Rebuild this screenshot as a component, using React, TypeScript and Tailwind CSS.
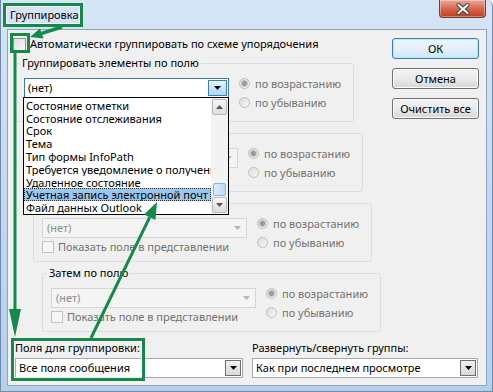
import React from "react";

const Tri = ({ color = "#000" }: { color?: string }) => (
  <svg width="7" height="4" viewBox="0 0 7 4">
    <path d="M0 0h7L3.5 4z" fill={color} />
  </svg>
);

function Radio({ checked, label }: { checked?: boolean; label: string }) {
  return (
    <div className="flex items-center h-[11px]">
      <span className="w-[11px] h-[11px] rounded-full border border-[#bdbdbd] bg-gradient-to-br from-[#dcdcdc] to-[#f7f7f7] flex items-center justify-center shrink-0">
        {checked && (
          <span className="w-[7px] h-[7px] rounded-full border border-[#c4c4c4] bg-[#9a9a9a]" />
        )}
      </span>
      <span className="ml-[5px] text-[#727272] whitespace-nowrap leading-[14px]">{label}</span>
    </div>
  );
}

function SmallCheck({ label, hidden }: { label: string; hidden?: boolean }) {
  return (
    <div className={`flex items-center h-[13px] mt-[2px] ${hidden ? "invisible" : ""}`}>
      <span className="w-[12px] h-[12px] border border-[#c3c3c3] bg-[#f6f6f6] shrink-0" />
      <span className="ml-[4px] text-[#727272] whitespace-nowrap leading-[14px]">{label}</span>
    </div>
  );
}

function DisabledDrop({ hideText }: { hideText?: boolean }) {
  return (
    <div className="h-[20px] w-[205px] border border-[#d6d6d6] bg-[#f4f4f4] flex items-center">
      <span className={`pl-[4px] text-[#8d8d8d] leading-[14px] ${hideText ? "invisible" : ""}`}>(нет)</span>
      <span className="ml-auto mr-[5px] flex items-center">
        <Tri color="#b5b5b5" />
      </span>
    </div>
  );
}

function GroupBox({
  title,
  indent,
  active,
  covered = 0,
  className = "",
}: {
  title: string;
  indent: string;
  active?: boolean;
  covered?: number;
  className?: string;
}) {
  // covered: 1 = box under the list's top part, 2 = box fully under list on left, 3 = only legend covered
  const hideLegend = covered === 2 || covered === 3;
  const hideCheck = covered === 1 || covered === 2;
  const hideDropText = covered === 2;
  return (
    <fieldset
      className={`border border-[#d5dfe5] rounded-[3px] w-[339px] px-[8px] pt-[8px] pb-[8px] ${indent} ${className}`}
    >
      <legend className="ml-[-4px] px-[2px] leading-[14px] whitespace-nowrap">
        <span className={hideLegend ? "invisible" : ""}>{title}</span>
      </legend>
      <div className="flex items-start">
        <div className="flex flex-col w-[205px]">
          {active ? (
            <div className="h-[20px] w-[205px] border border-[#3d7bad] bg-white flex items-center">
              <span className="pl-[3px] leading-[14px]">(нет)</span>
              <span className="ml-auto mr-[1px] h-[16px] w-[19px] border border-[#3c7fb1] bg-gradient-to-b from-[#e6f3fc] to-[#a9d8f4] flex items-center justify-center">
                <Tri />
              </span>
            </div>
          ) : (
            <DisabledDrop hideText={hideDropText} />
          )}
          <SmallCheck label="Показать поле в представлении" hidden={hideCheck} />
        </div>
        <div className="flex flex-col gap-[8px] ml-[10px]">
          <Radio checked label="по возрастанию" />
          <Radio label="по убыванию" />
        </div>
      </div>
    </fieldset>
  );
}

function Button({ label, def }: { label: string; def?: boolean }) {
  return (
    <div
      className={`h-[21px] w-[87px] rounded-[3px] border flex items-center justify-center leading-[14px] ${
        def
          ? "border-[#3c7fb1] bg-gradient-to-b from-[#eef7fd] via-[#e3f1fb] to-[#cfe6f7] shadow-[inset_0_0_0_1px_#bfe4fa]"
          : "border-[#707070] bg-gradient-to-b from-[#f3f3f3] via-[#ebebeb] to-[#d6d6d6] shadow-[inset_0_0_0_1px_#fcfcfc]"
      }`}
    >
      {label}
    </div>
  );
}

function Combo({ text, w }: { text: string; w: string }) {
  return (
    <div className={`h-[20px] ${w} border border-[#a9a9a9] bg-white flex items-center`}>
      <span className="pl-[3px] leading-[14px] whitespace-nowrap">{text}</span>
      <span className="ml-auto mr-[1px] h-[16px] w-[16px] border border-[#707070] bg-gradient-to-b from-[#f0f0f0] to-[#d9d9d9] flex items-center justify-center">
        <Tri />
      </span>
    </div>
  );
}

const listItems = [
  "Состояние отметки",
  "Состояние отслеживания",
  "Срок",
  "Тема",
  "Тип формы InfoPath",
  "Требуется уведомление о получени",
  "Удаленное состояние",
  "Учетная запись электронной почт",
  "Файл данных Outlook",
];

function ScrollBtn({ up }: { up?: boolean }) {
  return (
    <div className="h-[16px] w-[15px] mx-auto rounded-[2px] border border-[#b8b8b8] bg-gradient-to-b from-[#f7f7f7] to-[#dcdcdc] flex items-center justify-center">
      <svg width="7" height="4" viewBox="0 0 7 4">
        <path d={up ? "M0 4h7L3.5 0z" : "M0 0h7L3.5 4z"} fill="#555" />
      </svg>
    </div>
  );
}

function DropList() {
  return (
    <div className="absolute left-[23px] top-[97px] w-[206px] h-[118px] border border-black bg-white flex">
      <div className="flex-1 flex flex-col overflow-hidden pt-[1px]">
        {listItems.map((t, i) => (
          <div
            key={t}
            className={`h-[13px] flex items-center pl-[2px] whitespace-nowrap overflow-hidden leading-[13px] ${
              i === 7 ? "bg-[#99c7ef] outline-1 outline-dotted outline-[#333] outline-offset-[-1px]" : ""
            }`}
          >
            {t}
          </div>
        ))}
      </div>
      <div className="w-[17px] bg-[#f3f3f3] flex flex-col py-[1px]">
        <ScrollBtn up />
        <div className="flex-1 flex flex-col justify-end pb-[1px]">
          <div className="h-[13px] w-[13px] mx-auto rounded-[2px] border border-[#8db2d6] bg-gradient-to-r from-[#dbedfb] to-[#b9dbf6]" />
        </div>
        <ScrollBtn />
      </div>
    </div>
  );
}

function Annotations() {
  const G = "#15894a";
  return (
    <svg className="absolute inset-0 pointer-events-none" width="493" height="392" viewBox="0 0 493 392">
      <rect x="4.5" y="4.5" width="77" height="21" fill="none" stroke={G} strokeWidth="3" />
      <rect x="6.5" y="6.5" width="73" height="17" fill="none" stroke="#ffffff" strokeOpacity="0.8" strokeWidth="1" />
      <rect x="11.5" y="34.5" width="17" height="17" fill="none" stroke={G} strokeWidth="3" />
      <line x1="62" y1="27" x2="41.5" y2="33.4" stroke={G} strokeWidth="3.5" />
      <polygon points="30,37 43.5,38.5 40,28.4" fill={G} />
      <line x1="15" y1="53" x2="15" y2="312" stroke={G} strokeWidth="3" />
      <polygon points="9,309 21,309 15,337" fill={G} />
      <rect x="12.5" y="339.5" width="131" height="40" fill="none" stroke={G} strokeWidth="3" />
      <rect x="14.5" y="341.5" width="127" height="36" fill="none" stroke="#ffffff" strokeOpacity="0.8" strokeWidth="1" />
      <line x1="91" y1="338" x2="149.6" y2="217.3" stroke={G} strokeWidth="3" />
      <polygon points="157,202 155.4,220 144,214.6" fill={G} />
    </svg>
  );
}

export default function App() {
  return (
    <div className="relative w-[493px] h-[392px] overflow-hidden font-['Noto_Sans',sans-serif] text-[11px] text-black">
      <div className="flex flex-col h-full bg-gradient-to-b from-[#d6e5f6] via-[#c4d8ef] to-[#b6cfeb] border-l border-r border-b border-[#6f8aab] rounded-tr-[6px]">
        <div className="h-[29px] flex shrink-0">
          <span className="self-center pl-[9px] pt-[1px] leading-[14px] text-[11px]">Группировка</span>
          <div className="ml-auto mr-[6px] h-[18px] w-[47px] rounded-b-[4px] border border-t-0 border-[#7a3a2e] bg-gradient-to-b from-[#e9a999] via-[#d5694f] to-[#c23b1e] flex items-center justify-center shadow-[inset_0_0_0_1px_rgba(255,255,255,0.35)]">
            <svg width="14" height="12" viewBox="0 0 14 12">
              <path d="M2.5 2 L11.5 10 M11.5 2 L2.5 10" stroke="#3b3b3b" strokeWidth="4" strokeLinecap="round" />
              <path d="M2.5 2 L11.5 10 M11.5 2 L2.5 10" stroke="#ffffff" strokeWidth="2.2" strokeLinecap="round" />
            </svg>
          </div>
        </div>
        <div className="ml-[6px] w-[480px] h-[357px] border border-[#8ea3bd] bg-[#f0f0f0] flex flex-col pl-[5px] pr-[7px]">
          <div className="flex">
            <div className="flex-1 flex flex-col">
              <div className="mt-[7px] h-[14px] flex items-center">
                <span className="w-[13px] h-[13px] border border-[#8f8f8f] bg-gradient-to-br from-[#dcdcdc] to-[#fbfbfb] shrink-0" />
                <span className="ml-[4px] leading-[14px] whitespace-nowrap">
                  Автоматически группировать по схеме упорядочения
                </span>
              </div>
              <GroupBox title="Группировать элементы по полю" indent="ml-[2px]" active covered={1} className="mt-[5px]" />
              <GroupBox title="Затем по полю" indent="ml-[11px]" covered={2} className="mt-[4px]" />
              <GroupBox title="Затем по полю" indent="ml-[20px]" covered={3} className="mt-[4px]" />
              <GroupBox title="Затем по полю" indent="ml-[29px]" className="mt-[4px]" />
            </div>
            <div className="w-[87px] flex flex-col gap-[9px] pt-[8px]">
              <Button label="ОК" def />
              <Button label="Отмена" />
              <Button label="Очистить все" />
            </div>
          </div>
          <div className="flex mt-[9px] ml-[2px]">
            <div className="w-[228px] flex flex-col gap-[3px]">
              <span className="leading-[14px] whitespace-nowrap">Поля для группировки:</span>
              <Combo text="Все поля сообщения" w="w-[228px]" />
            </div>
            <div className="ml-[9px] w-[226px] flex flex-col gap-[3px]">
              <span className="leading-[14px] whitespace-nowrap">Развернуть/свернуть группы:</span>
              <Combo text="Как при последнем просмотре" w="w-[226px]" />
            </div>
          </div>
        </div>
      </div>
      <DropList />
      <Annotations />
    </div>
  );
}
